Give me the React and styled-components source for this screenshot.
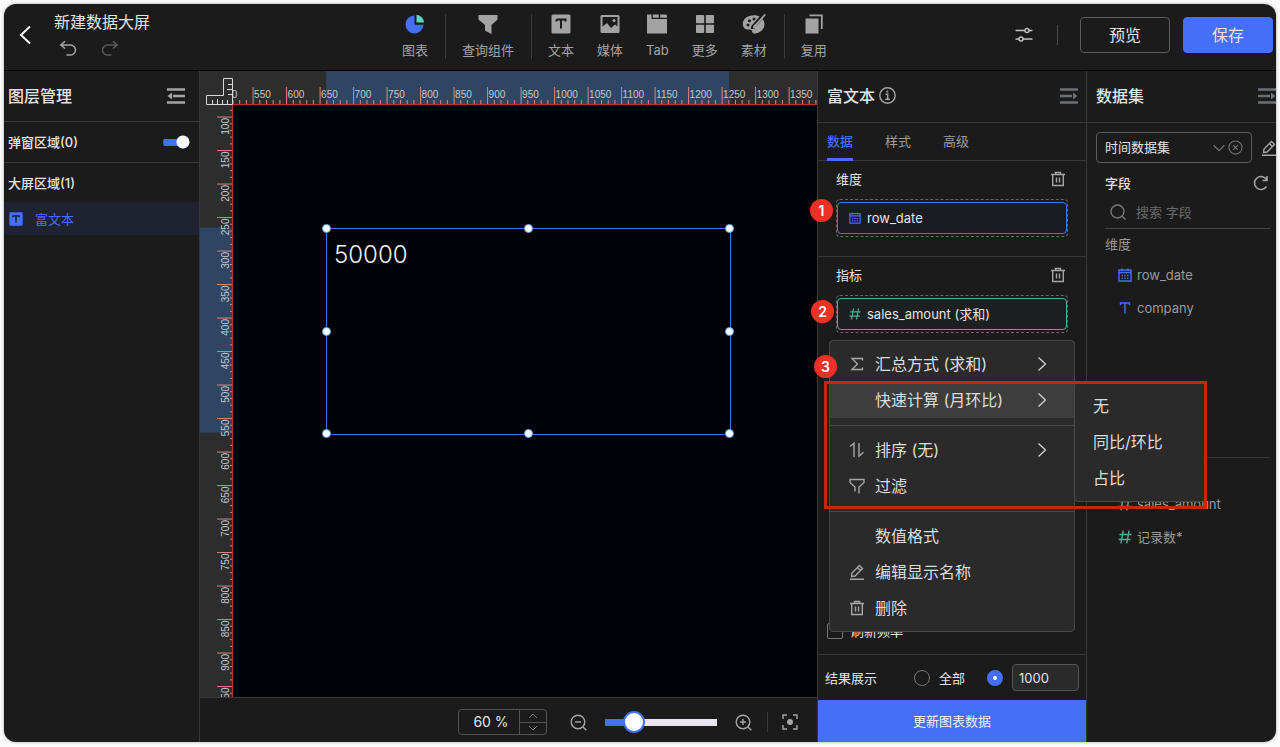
import React, { useState } from "react";
import styled, { createGlobalStyle, css } from "styled-components";

const GlobalStyle = createGlobalStyle`
  * {
    box-sizing: border-box;
  }
  body {
    margin: 0;
    background: #fbfbfb;
    color: #e4e4e4;
    font-family: Inter, "Noto Sans CJK SC", sans-serif;
    font-size: 13px;
    line-height: 20px;
  }
  button,
  input,
  select {
    font: inherit;
    color: inherit;
    margin: 0;
  }
  button {
    background: none;
    border: none;
    padding: 0;
    cursor: pointer;
  }
  h1, h2, h3, ul {
    margin: 0;
    padding: 0;
    font: inherit;
    list-style: none;
  }
  svg {
    display: block;
    flex: none;
  }
`;

const Page = styled.div`
  min-height: 100vh;
  padding: 4px 4px 5px;
  display: flex;
`;

const Window = styled.div`
  flex: 1;
  min-width: 0;
  display: flex;
  flex-direction: column;
  background: #1b1b1b;
  border-radius: 12px;
  overflow: hidden;
  box-shadow: 0 0 3px #999;
`;

/* ---------- header ---------- */

const Header = styled.header`
  height: 67px;
  display: flex;
  align-items: center;
  padding: 0 3px 0 14px;
  border-bottom: 1px solid #000;
`;

const HeaderStart = styled.div`
  display: flex;
  align-items: center;
  gap: 22px;
  width: 384px;
  padding-bottom: 4px;
`;

const TitleBlock = styled.div`
  display: flex;
  flex-direction: column;
  gap: 6px;
  padding-bottom: 3px;
`;

const ProjectTitle = styled.h1`
  font-size: 16px;
  line-height: 24px;
`;

const HistoryButtons = styled.div`
  display: flex;
  gap: 24px;
  padding-left: 5px;
`;

const IconButton = styled.button`
  display: grid;
  place-items: center;
  color: ${(p) => p.$color || "#a6a6a6"};
`;

const Toolbar = styled.nav`
  display: flex;
`;

const ToolGroup = styled.div`
  display: flex;
  gap: 23px;
  padding: 0 17px 0 16px;
  height: 45px;
  margin-bottom: 2px;

  &:first-child {
    padding-left: 0;
  }
  & + & {
    border-left: 1px solid #3a3a3a;
  }
`;

const Tool = styled.button`
  display: flex;
  flex-direction: column;
  align-items: center;
  gap: 6px;
  color: #a3a3a3;
`;

const HeaderEnd = styled.div`
  margin-left: auto;
  display: flex;
  align-items: center;
  padding-bottom: 4px;
`;

const HeaderRule = styled.span`
  width: 1px;
  height: 20px;
  margin: 0 22px 0 24px;
  background: #4a4a4a;
`;

const HeaderButton = styled.button`
  width: 90px;
  height: 36px;
  border-radius: 4px;
  border: 1px solid ${(p) => (p.$primary ? "#446ff6" : "#5c5c5c")};
  background: ${(p) => (p.$primary ? "#446ff6" : "transparent")};
  font-size: 16px;

  & + & {
    margin-left: 13px;
  }
`;

/* ---------- columns ---------- */

const Body = styled.div`
  flex: 1;
  min-height: 0;
  display: grid;
  grid-template-columns: 196px minmax(0, 1fr) 270px 189px;
`;

const Layers = styled.aside`
  border-right: 1px solid #383838;
`;

const PanelHead = styled.div`
  display: flex;
  align-items: center;
  justify-content: space-between;
  height: ${(p) => p.$height || 52}px;
  padding: ${(p) => p.$pad || "0 8px"};
  border-bottom: 1px solid #383838;
`;

const PanelTitle = styled.h2`
  display: flex;
  align-items: center;
  gap: 4px;
  font-size: 16px;
  font-weight: 500;
`;

const LayerRegion = styled.div`
  display: flex;
  align-items: center;
  justify-content: space-between;
  height: 40px;
  padding: 0 9px 0 4px;
  font-weight: 500;

  & + & {
    border-top: 1px solid #383838;
  }
`;

const LayerItem = styled.button`
  display: flex;
  align-items: center;
  gap: 12px;
  width: 100%;
  height: 33px;
  padding: 0 5px;
  background: #1f2230;
  color: #446ff6;
`;

const Switch = styled.input`
  appearance: none;
  width: 27px;
  height: 14px;
  border-radius: 7px;
  background:
    radial-gradient(circle at 20px 7px, #fff 6px, transparent 7px),
    linear-gradient(#446ff6, #446ff6) 0 4px / 22px 7px no-repeat;
`;

/* ---------- canvas ---------- */

const Stage = styled.main`
  display: grid;
  grid-template-columns: 33px minmax(0, 1fr);
  grid-template-rows: 34px minmax(0, 1fr) 45px;
`;

const RulerCorner = styled.div`
  background: #2d2d2d;
  display: flex;
  align-items: flex-end;
  justify-content: flex-end;
`;

const RulerSvg = styled.svg`
  width: 100%;
  height: 100%;
  background: #2d2d2d;
  font-family: "Liberation Sans", sans-serif;
  font-size: 10px;
`;

const RulerBox = styled.div`
  min-height: 0;
  overflow: hidden;
  contain: size;
`;

const Canvas = styled.div`
  position: relative;
  overflow: hidden;
  background: #020308;
`;

const SelectedWidget = styled.div`
  position: absolute;
  left: 93px;
  top: 123px;
  width: 405px;
  height: 207px;
  padding: 12px 7px;
  border: 1px solid #446ff6;
  color: #f0f0f0;
  font-size: 24px;
  font-weight: 300;
  line-height: 28px;
`;

const Handle = styled.span`
  position: absolute;
  left: ${(p) => p.$x}%;
  top: ${(p) => p.$y}%;
  width: 9px;
  height: 9px;
  margin: -5px;
  border: 1px solid #4aa3e8;
  border-radius: 50%;
  background: #fff;
`;

const StageFooter = styled.footer`
  grid-column: 1 / -1;
  display: flex;
  align-items: center;
  justify-content: flex-end;
  gap: 18px;
  padding: 4px 19px 0 0;
  border-top: 1px solid #383838;
`;

const ZoomBox = styled.div`
  display: flex;
  width: 89px;
  height: 26px;
  margin-right: 5px;
  border: 1px solid #545454;
  border-radius: 4px;
`;

const ZoomInput = styled.input`
  flex: 1;
  min-width: 0;
  padding: 0 0 0 4px;
  border: none;
  background: none;
  text-align: center;
  font-size: 14px;
`;

const Stepper = styled.div`
  display: grid;
  width: 27px;
  border-left: 1px solid #545454;

  button + button {
    border-top: 1px solid #545454;
  }
`;

const Range = styled.input`
  appearance: none;
  width: 112px;
  height: 22px;
  background: linear-gradient(90deg, #446ff6 30px, #e9e6f0 30px) center / 100% 7px no-repeat;

  &::-webkit-slider-thumb {
    appearance: none;
    width: 22px;
    height: 22px;
    border: 2px solid #446ff6;
    border-radius: 50%;
    background: #fff;
  }
`;

const FooterRule = styled.span`
  width: 1px;
  height: 20px;
  margin: 0 -4px 0 -3px;
  background: #3a3a3a;
`;

/* ---------- settings panel ---------- */

const Settings = styled.section`
  display: flex;
  flex-direction: column;
  position: relative;
  z-index: 2;
  border-left: 1px solid #383838;
  border-right: 1px solid #383838;
`;

const Tabs = styled.div`
  display: flex;
  gap: 32px;
  height: 38px;
  padding: 0 9px;
  border-bottom: 1px solid #383838;
`;

const Tab = styled.button`
  padding-top: 1px;
  margin-bottom: -1px;
  border-bottom: 3px solid ${(p) => (p.$active ? "#446ff6" : "transparent")};
  color: ${(p) => (p.$active ? "#446ff6" : "#9c9c9c")};
  font-weight: ${(p) => (p.$active ? 500 : 400)};
`;

const FieldSection = styled.div`
  height: 95px;
  padding: 7px 18px 0;

  & + & {
    border-top: 1px solid #383838;
  }
`;

const SectionHead = styled.div`
  display: flex;
  align-items: center;
  justify-content: space-between;
  height: 22px;
  margin-bottom: 9px;
  padding-right: 2px;
`;

const DropZone = styled.div`
  position: relative;
  height: 38px;
  padding: 2px 0;
  border: 1px dashed #666;
  border-radius: 4px;
`;

const FieldChip = styled.button`
  display: flex;
  align-items: center;
  gap: 6px;
  width: 100%;
  height: 32px;
  padding: 0 11px;
  border: 1px solid ${(p) => p.$color};
  border-radius: 4px;
  background: ${(p) => p.$fill};
`;

const StepBadge = styled.span`
  position: absolute;
  z-index: 3;
  left: ${(p) => p.$left}px;
  top: ${(p) => p.$top}px;
  display: grid;
  place-items: center;
  width: 23px;
  height: 23px;
  border-radius: 50%;
  background: #ee3124;
  color: #fff;
  font-size: 14px;
  font-weight: 600;
`;

const Menu = styled.div`
  position: absolute;
  z-index: 2;
  left: -8px;
  top: 44px;
  width: 246px;
  padding: 5px 0;
  border: 1px solid #484848;
  border-radius: 4px;
  background: #2a2a2a;
`;

const menuItem = css`
  display: flex;
  align-items: center;
  width: 100%;
  height: 36px;
  font-size: 16px;
  color: #dcdcdc;
`;

const MenuItem = styled.button`
  ${menuItem}
  gap: 10px;
  padding: 0 27px 0 19px;
  background: ${(p) => (p.$active ? "#3d3d3d" : "none")};
`;

const MenuIcon = styled.span`
  width: 16px;
  color: #a6a6a6;
`;

const MenuLabel = styled.span`
  flex: 1;
  text-align: left;
`;

const MenuEntry = styled.div`
  position: relative;
`;

const MenuRule = styled.hr`
  height: 1px;
  margin: 7px 0 6px;
  border: none;
  background: #4a4a4a;
`;

const SubMenu = styled.div`
  position: absolute;
  left: 100%;
  top: 0;
  width: 132px;
  padding: 5px 0;
  border: 1px solid #484848;
  border-radius: 4px;
  background: #2a2a2a;
`;

const SubMenuItem = styled.button`
  ${menuItem}
  padding: 0 18px;
`;

const Highlight = styled.div`
  position: absolute;
  z-index: 3;
  left: -6px;
  top: 40px;
  width: 383px;
  height: 128px;
  border: 3px solid #c8240e;
  pointer-events: none;
`;

const RefreshRow = styled.label`
  display: flex;
  align-items: center;
  gap: 8px;
  margin-top: auto;
  padding: 0 9px 13px;
`;

const CheckBox = styled.input`
  appearance: none;
  width: 16px;
  height: 16px;
  border: 1px solid #777;
  border-radius: 2px;
`;

const ResultRow = styled.div`
  display: flex;
  align-items: center;
  height: 46px;
  padding: 0 7px;
  border-top: 1px solid #383838;
`;

const ResultOption = styled.label`
  display: flex;
  align-items: center;
  gap: 9px;
  margin-left: ${(p) => p.$space}px;
`;

const Radio = styled.input`
  appearance: none;
  width: 16px;
  height: 16px;
  border: 1px solid #777;
  border-radius: 50%;

  &:checked {
    border: 6px solid #446ff6;
    background: #fff;
  }
`;

const LimitInput = styled.input`
  width: 67px;
  height: 27px;
  padding: 0 6px;
  border: 1px solid #545454;
  border-radius: 4px;
  background: #2a2a2a;
`;

const UpdateButton = styled.button`
  height: 42px;
  background: #446ff6;
  color: #f0f3ff;
`;

/* ---------- dataset panel ---------- */

const Dataset = styled.aside`
  display: flex;
  flex-direction: column;
  overflow: hidden;
  white-space: nowrap;
`;

const DatasetRow = styled.div`
  display: flex;
  align-items: center;
  gap: 9px;
  padding: 9px 0 0 9px;
`;

const SelectBox = styled.div`
  display: flex;
  align-items: center;
  gap: 2px;
  flex: none;
  width: 156px;
  height: 31px;
  padding: 0 8px;
  border: 1px solid #5c5c5c;
  border-radius: 4px;
  color: #707070;
`;

const DatasetSelect = styled.select`
  appearance: none;
  flex: 1;
  min-width: 0;
  padding: 0 0 2px;
  border: none;
  background: none;
  color: #e4e4e4;
`;

const DatasetHead = styled.div`
  display: flex;
  align-items: center;
  justify-content: space-between;
  height: 40px;
  padding: 0 7px 0 18px;
  font-weight: 500;
`;

const Search = styled.label`
  display: flex;
  align-items: center;
  gap: 10px;
  height: 26px;
  margin: 0 6px 0 18px;
  padding: 0 0 8px 5px;
  border-bottom: 1px solid #444;
  color: #777;
`;

const SearchInput = styled.input`
  flex: 1;
  min-width: 0;
  border: none;
  padding: 0;
  background: none;

  &::placeholder {
    color: #6b6b6b;
  }
`;

const FieldGroup = styled.div`
  margin: 0 6px 0 18px;
  padding-top: 5px;
  min-height: ${(p) => p.$min || 0}px;
  color: #9a9a9a;

  & + & {
    border-top: 1px solid #383838;
  }
`;

const FieldItem = styled.li`
  display: flex;
  align-items: center;
  gap: 5px;
  height: 33px;
  padding-left: 13px;

  &:first-child {
    margin-top: 4px;
  }
`;

/* ---------- icons ---------- */

const Icon = ({ size = 16, w, h, box = "0 0 16 16", fill = "none", width = 1.4, children }) => (
  <svg
    width={w || size}
    height={h || size}
    viewBox={box}
    fill={fill}
    stroke={fill === "none" ? "currentColor" : "none"}
    strokeWidth={width}
    aria-hidden="true"
  >
    {children}
  </svg>
);

const BackIcon = () => (
  <Icon w={14} h={20} box="0 0 14 20" width={2}>
    <path d="M12 1.5 3 10l9 8.5" />
  </Icon>
);

const UndoIcon = ({ flip }) => (
  <Icon size={18} box="0 0 18 18" width={1.5}>
    <path
      transform={flip ? "matrix(-1 0 0 1 18 0)" : undefined}
      d="M6 1.200 1.800 5l4.200 3.500M2 5h9.500a5 5 0 0 1 0 10H7.500"
    />
  </Icon>
);

const PieIcon = () => (
  <Icon size={20} box="0 0 20 20" fill="currentColor">
    <path fill="#446ff6" d="M9.500 1.500A9 9 0 1 0 18.500 10.800H9.500z" />
    <path fill="#5fd6bd" d="M11.500 0.800A8.400 8.400 0 0 1 19 8.500H11.500z" />
  </Icon>
);

const FunnelSolid = () => (
  <Icon size={20} box="0 0 20 20" fill="currentColor">
    <path d="M0.500 1h19v4.500L13.500 11v9L7 16.500V11L0.500 5.500z" />
  </Icon>
);

const TextSolid = ({ size = 20 }) => (
  <Icon size={size} box="0 0 20 20" fill="currentColor">
    <rect x="0.500" y="0.500" width="19" height="19" rx="1.500" />
    <path d="M5.500 5.500h9v2M5.500 5.500v2M10 5.500v9" fill="none" stroke="#1b1b1b" strokeWidth="2" />
  </Icon>
);

const ImageSolid = () => (
  <Icon size={20} box="0 0 20 20" fill="currentColor">
    <rect x="0.500" y="1" width="19" height="18" rx="1.500" />
    <path fill="#1b1b1b" d="M2.500 12.500V3h15v9.500l-2.500-2-4 3.500-4-5z" />
    <circle cx="14" cy="6.500" r="1.600" />
  </Icon>
);

const TabSolid = () => (
  <Icon w={22} h={20} box="0 0 22 20" fill="currentColor">
    <path d="M1 0.500h4.500V5H21v14.500H1z" />
    <path d="M6.800 0.500h6v3.300h-6zM14.200 0.500h5.300q1.500 0 1.500 1.500v1.800h-6.800z" />
  </Icon>
);

const GridSolid = () => (
  <Icon size={20} box="0 0 20 20" fill="currentColor">
    <rect x="1" y="1" width="8.200" height="8.200" rx="0.800" />
    <rect x="10.800" y="1" width="8.200" height="8.200" rx="0.800" />
    <rect x="1" y="10.800" width="8.200" height="8.200" rx="0.800" />
    <rect x="10.800" y="10.800" width="8.200" height="8.200" rx="0.800" />
  </Icon>
);

const PaletteSolid = () => (
  <Icon w={24} h={20} box="0 0 24 20" fill="currentColor">
    <path d="M12 1.200C5.500 1.200 0.800 5 0.800 10c0 4 3.200 6 6.400 5.500 2-.3 2.800.8 3 2.200.4 2 2.300 2 4.300 1.500 4.500-1 8-4.500 8-9.200C22.500 5 18 1.200 12 1.200z" />
    <g fill="#1b1b1b">
      <circle cx="6" cy="11" r="1.500" />
      <circle cx="7.500" cy="6.800" r="1.500" />
      <circle cx="12" cy="5" r="1.500" />
    </g>
    <path d="M10.500 15c.3-2 1.200-3.500 2.500-4.200L22.500 0" fill="none" stroke="#1b1b1b" strokeWidth="4" />
    <path d="M11 14.500c2.500 0 3.500-1 3.700-2.700L24 0.800 22.500 0 13 10.500c-1.500.5-2 2-2 4z" />
  </Icon>
);

const CopySolid = () => (
  <Icon size={20} box="0 0 20 20" fill="currentColor">
    <rect x="1.500" y="4.500" width="13" height="15" rx="0.500" />
    <path d="M5.500 1.300h12.300V15" fill="none" stroke="currentColor" strokeWidth="1.800" />
  </Icon>
);

const SlidersIcon = () => (
  <Icon w={18} h={16} box="0 0 18 16">
    <path d="M0.500 3.500H10M14 3.500h3.500M0.500 12H4M8 12h9.500" />
    <circle cx="12" cy="3.500" r="2" />
    <circle cx="6" cy="12" r="2" />
  </Icon>
);

const FoldIcon = ({ open }) => (
  <Icon w={18} h={16} box="0 0 18 16" width={2.600}>
    {open ? (
      <>
        <path d="M0 1.500h18M0 8h12M0 14.500h18" />
        <path d="M13 4.500v7l4.500-3.500z" fill="currentColor" stroke="none" />
      </>
    ) : (
      <>
        <path d="M0 1.500h18M6 8h12M0 14.500h18" />
        <path d="M5 4.500v7L0.500 8z" fill="currentColor" stroke="none" />
      </>
    )}
  </Icon>
);

const InfoIcon = () => (
  <Icon size={17} box="0 0 17 17">
    <circle cx="8.500" cy="8.500" r="7.700" />
    <path d="M6.500 7.200h2.200v5M6.300 12.300h4.600" />
    <circle cx="8.400" cy="4.500" r="1" fill="currentColor" stroke="none" />
  </Icon>
);

const TrashIcon = () => (
  <Icon>
    <path d="M1 3.500h14M2.700 3.500v11h10.600v-11M5.500 3.500v-2h5v2M6.500 6.500v5M9.500 6.500v5" />
  </Icon>
);

const CalendarIcon = ({ size = 14 }) => (
  <Icon size={size} box="0 0 14 14" width={1.400}>
    <path d="M1 2h12v11H1zM4 0.500V3M10 0.500V3M1 4.500h12" />
    <path d="M3.500 7.500h7M3.500 10.300h7" strokeDasharray="1.500 1.200" strokeWidth="1.500" />
  </Icon>
);

const HashIcon = ({ size = 12 }) => (
  <Icon size={size} box="0 0 12 12" width={1.200}>
    <path d="M4.500 0.500 2.500 11.500M9.500 0.500l-2 11M1.200 3.800h10.300M0.500 8.200h10.300" />
  </Icon>
);

const LetterIcon = () => (
  <Icon size={14} box="0 0 14 14">
    <path d="M2.500 4V2h9v2M7 2v10.500" />
  </Icon>
);

const SigmaIcon = () => (
  <Icon>
    <path d="M13.500 4.500V2.500H3L8.500 8 3 13.500h10.500v-2" />
  </Icon>
);

const SortIcon = () => (
  <Icon>
    <path d="M1 4.500 5 1.200V15M10 1v13.300l4.500-4" />
  </Icon>
);

const FilterIcon = () => (
  <Icon>
    <path d="M6 13.500V9L1 4.500v-3h14v3L10 9v6.500" />
  </Icon>
);

const PencilIcon = () => (
  <Icon>
    <path d="M1 15.300h14M2.500 12.500l.5-3.500 7.500-7.500 3 3L6 12zM8.500 3.500l3 3" />
  </Icon>
);

const ChevronRight = () => (
  <Icon w={10} h={16} box="0 0 10 16" width={1.200}>
    <path d="M1.500 1.500 8.500 8l-7 6.500" />
  </Icon>
);

const ChevronSmall = ({ up, w = 10, h = 6 }) => (
  <Icon w={w} h={h} box="0 0 10 6" width={1}>
    <path d={up ? "M1 5l4-4 4 4" : "M1 1l4 4 4-4"} />
  </Icon>
);

const ClearIcon = () => (
  <Icon size={15} width={1.200}>
    <circle cx="8" cy="8" r="7" />
    <path d="M5.500 5.500l5 5M10.500 5.500l-5 5" />
  </Icon>
);

const RefreshIcon = () => (
  <Icon width={1.500}>
    <path d="M13.500 11.500A6.500 6.500 0 1 1 13.800 5M14 1v4.500H9.500" />
  </Icon>
);

const SearchIcon = () => (
  <Icon>
    <circle cx="7.500" cy="7.500" r="6.500" />
    <path d="M12 12l3.500 3.500" />
  </Icon>
);

const ZoomIcon = ({ plus }) => (
  <Icon size={17} box="0 0 17 17">
    <circle cx="8" cy="8" r="6.800" />
    <path d={plus ? "M5 8h6M8 5v6" : "M5 8h6"} />
    <path d="M13 13l3.300 3.300" />
  </Icon>
);

const FocusIcon = () => (
  <Icon>
    <path d="M1 5V1h4M11 1h4v4M15 11v4h-4M5 15H1v-4" />
    <circle cx="8" cy="8" r="3" fill="currentColor" stroke="none" />
  </Icon>
);

const RulerIcon = () => (
  <Icon w={28} h={28} box="0 0 28 28" width={1}>
    <path stroke="#d8d8d8" d="M1.500 27.500v-9h17v-17h9v26zM7.500 27v-4M12.500 27v-5M17.500 27v-4M22.500 27v-4M27 7.500h-4M27 12.500h-5M27 17.500h-4" />
  </Icon>
);

/* ---------- rulers ---------- */

const SCALE = 0.67;

const marks = (from, to) =>
  Array.from({ length: (to - from) / 10 + 1 }, (_, i) => from + i * 10);

function TopRuler() {
  const toX = (n) => (n - 520) * SCALE;
  return (
    <RulerSvg>
      <rect x={toX(659)} y="0" width="403" height="33" fill="#2f4562" />
      {marks(500, 1390).map((n) => (
        <g key={n}>
          <path d={`M${toX(n)} ${n % 50 ? 29 : 16}V33`} stroke="#dc8580" />
          {n % 50 === 0 && (
            <text x={toX(n) + 1} y="27" fill="#c4c8cd">
              {n}
            </text>
          )}
        </g>
      ))}
      <path d="M0 33.500h4000" stroke="#b5332f" />
    </RulerSvg>
  );
}

function SideRuler() {
  const toY = (n) => (n - 82) * SCALE;
  return (
    <RulerSvg>
      <rect x="0" y={toY(265)} width="32" height="205" fill="#2f4562" />
      {marks(90, 960).map((n) => (
        <g key={n}>
          <path d={`M${n % 50 ? 30 : 17} ${toY(n)}H32`} stroke="#dc8580" />
          {n % 50 === 0 && (
            <text
              transform={`translate(29 ${toY(n) + 1}) rotate(-90)`}
              textAnchor="end"
              fill="#c4c8cd"
            >
              {n}
            </text>
          )}
        </g>
      ))}
      <path d="M32.500 0v4000" stroke="#b5332f" />
    </RulerSvg>
  );
}

/* ---------- data ---------- */

const TOOL_GROUPS = [
  [{ name: "图表", icon: <PieIcon /> }],
  [{ name: "查询组件", icon: <FunnelSolid /> }],
  [
    { name: "文本", icon: <TextSolid /> },
    { name: "媒体", icon: <ImageSolid /> },
    { name: "Tab", icon: <TabSolid /> },
    { name: "更多", icon: <GridSolid /> },
    { name: "素材", icon: <PaletteSolid /> },
  ],
  [{ name: "复用", icon: <CopySolid /> }],
];

const HANDLES = [
  [0, 0],
  [50, 0],
  [100, 0],
  [0, 50],
  [100, 50],
  [0, 100],
  [50, 100],
  [100, 100],
];

const MENU = [
  [
    { label: "汇总方式 (求和)", icon: <SigmaIcon />, more: true },
    { label: "快速计算 (月环比)", more: true, children: ["无", "同比/环比", "占比"] },
  ],
  [
    { label: "排序 (无)", icon: <SortIcon />, more: true },
    { label: "过滤", icon: <FilterIcon /> },
  ],
  [
    { label: "数值格式" },
    { label: "编辑显示名称", icon: <PencilIcon /> },
    { label: "删除", icon: <TrashIcon /> },
  ],
];

const TABS = ["数据", "样式", "高级"];

function FieldMenu() {
  return (
    <Menu role="menu">
      {MENU.map((group, i) => (
        <React.Fragment key={i}>
          {i > 0 && <MenuRule />}
          {group.map((item) => (
            <MenuEntry key={item.label}>
              <MenuItem role="menuitem" $active={!!item.children}>
                <MenuIcon>{item.icon}</MenuIcon>
                <MenuLabel>{item.label}</MenuLabel>
                {item.more && <ChevronRight />}
              </MenuItem>
              {item.children && (
                <SubMenu role="menu">
                  {item.children.map((name) => (
                    <SubMenuItem key={name} role="menuitem">
                      {name}
                    </SubMenuItem>
                  ))}
                </SubMenu>
              )}
            </MenuEntry>
          ))}
        </React.Fragment>
      ))}
      <Highlight />
      <StepBadge $left={-16} $top={14}>3</StepBadge>
    </Menu>
  );
}

function App() {
  const [tab, setTab] = useState("数据");
  const [limit, setLimit] = useState("1000");
  const [zoom, setZoom] = useState(60);

  return (
    <Page>
      <GlobalStyle />
      <Window>
        <Header>
          <HeaderStart>
            <IconButton $color="#fff" aria-label="返回">
              <BackIcon />
            </IconButton>
            <TitleBlock>
              <ProjectTitle>新建数据大屏</ProjectTitle>
              <HistoryButtons>
                <IconButton aria-label="撤销">
                  <UndoIcon />
                </IconButton>
                <IconButton $color="#5a5a5a" aria-label="重做">
                  <UndoIcon flip />
                </IconButton>
              </HistoryButtons>
            </TitleBlock>
          </HeaderStart>
          <Toolbar>
            {TOOL_GROUPS.map((group, i) => (
              <ToolGroup key={i}>
                {group.map((tool) => (
                  <Tool key={tool.name}>
                    {tool.icon}
                    {tool.name}
                  </Tool>
                ))}
              </ToolGroup>
            ))}
          </Toolbar>
          <HeaderEnd>
            <IconButton $color="#c4c4c4" aria-label="设置">
              <SlidersIcon />
            </IconButton>
            <HeaderRule />
            <HeaderButton>预览</HeaderButton>
            <HeaderButton $primary>保存</HeaderButton>
          </HeaderEnd>
        </Header>

        <Body>
          <Layers>
            <PanelHead $height={51} $pad="0 14px 0 4px">
              <PanelTitle>图层管理</PanelTitle>
              <IconButton aria-label="收起">
                <FoldIcon />
              </IconButton>
            </PanelHead>
            <LayerRegion as="label">
              弹窗区域(0)
              <Switch type="checkbox" defaultChecked />
            </LayerRegion>
            <LayerRegion>大屏区域(1)</LayerRegion>
            <LayerItem>
              <TextSolid size={14} />
              富文本
            </LayerItem>
          </Layers>

          <Stage>
            <RulerCorner>
              <RulerIcon />
            </RulerCorner>
            <RulerBox>
              <TopRuler />
            </RulerBox>
            <RulerBox>
              <SideRuler />
            </RulerBox>
            <Canvas>
              <SelectedWidget>
                50000
                {HANDLES.map(([x, y]) => (
                  <Handle key={`${x}-${y}`} $x={x} $y={y} />
                ))}
              </SelectedWidget>
            </Canvas>
            <StageFooter>
              <ZoomBox>
                <ZoomInput aria-label="缩放比例" value={`${zoom} %`} readOnly />
                <Stepper>
                  <IconButton $color="#777" aria-label="增加" onClick={() => setZoom(zoom + 1)}>
                    <ChevronSmall up />
                  </IconButton>
                  <IconButton $color="#777" aria-label="减少" onClick={() => setZoom(zoom - 1)}>
                    <ChevronSmall />
                  </IconButton>
                </Stepper>
              </ZoomBox>
              <IconButton aria-label="缩小">
                <ZoomIcon />
              </IconButton>
              <Range
                type="range"
                aria-label="缩放"
                min="20"
                max="220"
                value={zoom}
                onChange={(e) => setZoom(Number(e.target.value))}
              />
              <IconButton aria-label="放大">
                <ZoomIcon plus />
              </IconButton>
              <FooterRule />
              <IconButton aria-label="适应屏幕">
                <FocusIcon />
              </IconButton>
            </StageFooter>
          </Stage>

          <Settings>
            <PanelHead $pad="0 8px 2px 9px">
              <PanelTitle>
                富文本
                <IconButton aria-label="说明">
                  <InfoIcon />
                </IconButton>
              </PanelTitle>
              <IconButton $color="#6c7078" aria-label="收起">
                <FoldIcon open />
              </IconButton>
            </PanelHead>
            <Tabs role="tablist">
              {TABS.map((name) => (
                <Tab
                  key={name}
                  role="tab"
                  aria-selected={tab === name}
                  $active={tab === name}
                  onClick={() => setTab(name)}
                >
                  {name}
                </Tab>
              ))}
            </Tabs>
            <FieldSection>
              <SectionHead>
                <h3>维度</h3>
                <IconButton aria-label="清空维度">
                  <TrashIcon />
                </IconButton>
              </SectionHead>
              <DropZone>
                <FieldChip $color="#446ff6" $fill="#1b1c22">
                  <IconButton as="span" $color="#446ff6">
                    <CalendarIcon size={12} />
                  </IconButton>
                  row_date
                </FieldChip>
                <StepBadge $left={-27} $top={-1}>1</StepBadge>
              </DropZone>
            </FieldSection>
            <FieldSection>
              <SectionHead>
                <h3>指标</h3>
                <IconButton aria-label="清空指标">
                  <TrashIcon />
                </IconButton>
              </SectionHead>
              <DropZone>
                <FieldChip $color="#4cae96" $fill="#1c2021">
                  <IconButton as="span" $color="#4cae96">
                    <HashIcon />
                  </IconButton>
                  sales_amount (求和)
                </FieldChip>
                <StepBadge $left={-26} $top={4}>2</StepBadge>
                <FieldMenu />
              </DropZone>
            </FieldSection>
            <RefreshRow>
              <CheckBox type="checkbox" />
              刷新频率
            </RefreshRow>
            <ResultRow>
              结果展示
              <ResultOption $space={37}>
                <Radio type="radio" name="result" />
                全部
              </ResultOption>
              <ResultOption $space={22}>
                <Radio type="radio" name="result" defaultChecked />
                <LimitInput
                  aria-label="结果条数"
                  value={limit}
                  onChange={(e) => setLimit(e.target.value)}
                />
              </ResultOption>
            </ResultRow>
            <UpdateButton>更新图表数据</UpdateButton>
          </Settings>

          <Dataset>
            <PanelHead $pad="0 0 2px 9px">
              <PanelTitle>数据集</PanelTitle>
              <IconButton $color="#6c7078" aria-label="收起">
                <FoldIcon open />
              </IconButton>
            </PanelHead>
            <DatasetRow>
              <SelectBox>
                <DatasetSelect aria-label="数据集">
                  <option>时间数据集</option>
                </DatasetSelect>
                <ChevronSmall w={14} h={8} />
                <IconButton $color="#707070" aria-label="清除">
                  <ClearIcon />
                </IconButton>
              </SelectBox>
              <IconButton aria-label="编辑数据集">
                <PencilIcon />
              </IconButton>
            </DatasetRow>
            <DatasetHead>
              <h3>字段</h3>
              <IconButton aria-label="刷新">
                <RefreshIcon />
              </IconButton>
            </DatasetHead>
            <Search>
              <SearchIcon />
              <SearchInput type="search" aria-label="搜索字段" placeholder="搜索 字段" />
            </Search>
            <FieldGroup $min={228}>
              <h3>维度</h3>
              <ul>
                <FieldItem>
                  <IconButton as="span" $color="#446ff6">
                    <CalendarIcon />
                  </IconButton>
                  row_date
                </FieldItem>
                <FieldItem>
                  <IconButton as="span" $color="#446ff6">
                    <LetterIcon />
                  </IconButton>
                  company
                </FieldItem>
              </ul>
            </FieldGroup>
            <FieldGroup>
              <h3>指标</h3>
              <ul>
                <FieldItem>
                  <IconButton as="span" $color="#4cae96">
                    <HashIcon size={14} />
                  </IconButton>
                  sales_amount
                </FieldItem>
                <FieldItem>
                  <IconButton as="span" $color="#4cae96">
                    <HashIcon size={14} />
                  </IconButton>
                  记录数*
                </FieldItem>
              </ul>
            </FieldGroup>
          </Dataset>
        </Body>
      </Window>
    </Page>
  );
}

export default App;
